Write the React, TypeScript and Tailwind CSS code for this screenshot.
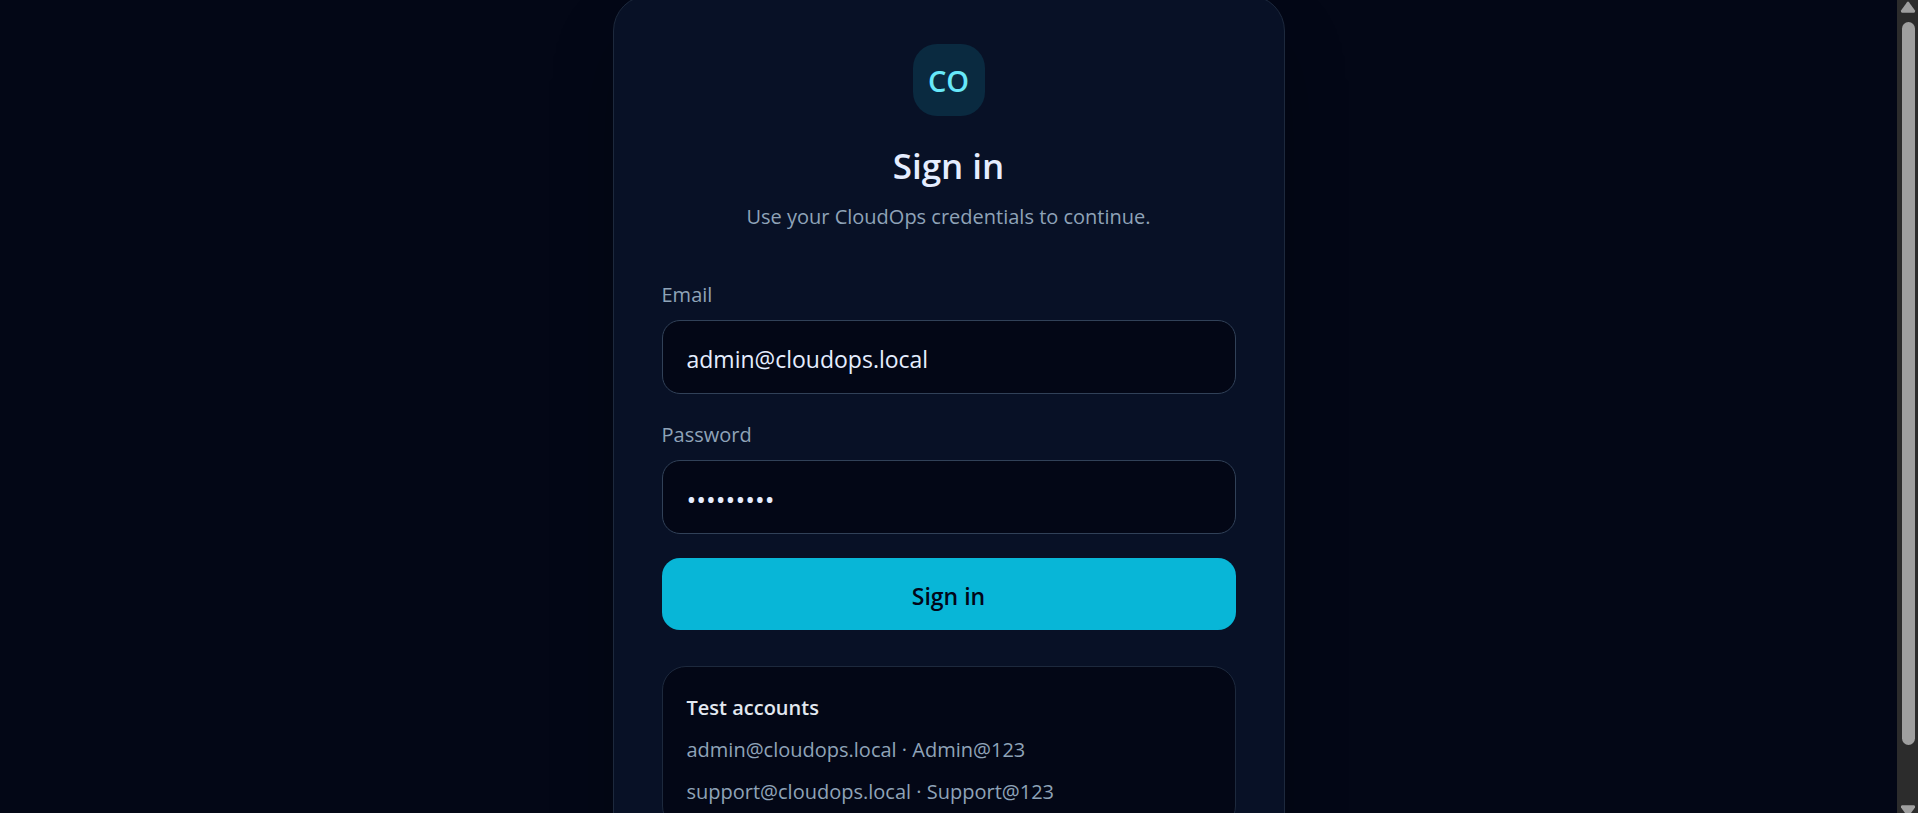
import { useState } from "react";

const testAccounts = [
  { email: "admin@cloudops.local", password: "Admin@123" },
  { email: "support@cloudops.local", password: "Support@123" },
];

type FieldProps = {
  id: string;
  label: string;
  type: "email" | "password";
  value: string;
  onChange: (value: string) => void;
};

const inputSizes = {
  email: "text-[23px]",
  password: "text-[26px]",
};

function Field({ id, label, type, value, onChange }: FieldProps) {
  return (
    <div>
      <label htmlFor={id} className="block text-[20px] leading-[30px] text-[#8fa3b8]">
        {label}
      </label>
      <input
        id={id}
        type={type}
        value={value}
        onChange={(event) => onChange(event.target.value)}
        className={`mt-[10px] block h-[74px] w-full rounded-[18px] border border-slate-700 bg-[#030716] px-6 pt-5 pb-4 text-[#e5edff] outline-none ${inputSizes[type]}`}
      />
    </div>
  );
}

function Scrollbar() {
  return (
    <div aria-hidden="true" className="flex w-[21px] shrink-0 flex-col items-center bg-[#2c2c2c] pl-px">
      <svg viewBox="0 0 16 14" className="h-[14px] w-4 shrink-0" fill="#9f9f9f">
        <path d="M7 2.2Q8 1 9 2.2L15 10.6Q15.6 12.6 14 12.8H2Q.4 12.6 1 10.6Z" />
      </svg>
      <div className="mt-2 mb-[60px] w-[13px] flex-1 rounded-full bg-[#9f9f9f]" />
      <svg viewBox="0 0 16 8" className="h-2 w-4 shrink-0" fill="#9f9f9f">
        <path d="M2 .2H14Q15.6.4 15 2.4L11 8H5L1 2.4Q.4.4 2 .2Z" />
      </svg>
    </div>
  );
}

export default function App() {
  const [email, setEmail] = useState("admin@cloudops.local");
  const [password, setPassword] = useState("Admin@123");

  return (
    <div className="flex h-screen overflow-hidden bg-[#030716] font-['Open_Sans','Noto_Sans',sans-serif] text-[#e5edff]">
      <main className="flex flex-1 items-start justify-center">
        <section className="-mt-[5px] w-full max-w-2xl rounded-[36px] border border-slate-800 bg-[#081126] p-12 shadow-[0_36px_75px_-18px_rgba(0,0,0,0.4)]">
          <div className="text-center">
            <div className="mx-auto flex size-[72px] items-center justify-center rounded-3xl bg-[#0a2a40] pt-0.5 text-[29px] font-semibold text-[#67e8f9]">
              CO
            </div>
            <h1 className="mt-[26px] text-[35px] leading-[48px] font-semibold">Sign in</h1>
            <p className="mt-3 text-[20px] leading-[30px] text-[#8fa3b8]">
              Use your CloudOps credentials to continue.
            </p>
          </div>

          <form className="mt-12" onSubmit={(event) => event.preventDefault()}>
            <div className="space-y-[26px]">
              <Field id="email" label="Email" type="email" value={email} onChange={setEmail} />
              <Field
                id="password"
                label="Password"
                type="password"
                value={password}
                onChange={setPassword}
              />
            </div>
            <button
              type="submit"
              className="mt-6 block w-full rounded-[18px] bg-[#08b6d7] pt-5 pb-4 text-[23px] leading-9 font-semibold text-slate-950"
            >
              Sign in
            </button>
          </form>

          <div className="mt-9 space-y-3 rounded-3xl border border-slate-800 bg-[#030716] px-6 pt-[26px] pb-[22px] text-[20px] leading-[30px] text-[#8fa3b8]">
            <p className="font-semibold text-slate-200">Test accounts</p>
            {testAccounts.map((account) => (
              <p key={account.email}>
                {account.email} · {account.password}
              </p>
            ))}
          </div>
        </section>
      </main>
      <Scrollbar />
    </div>
  );
}
